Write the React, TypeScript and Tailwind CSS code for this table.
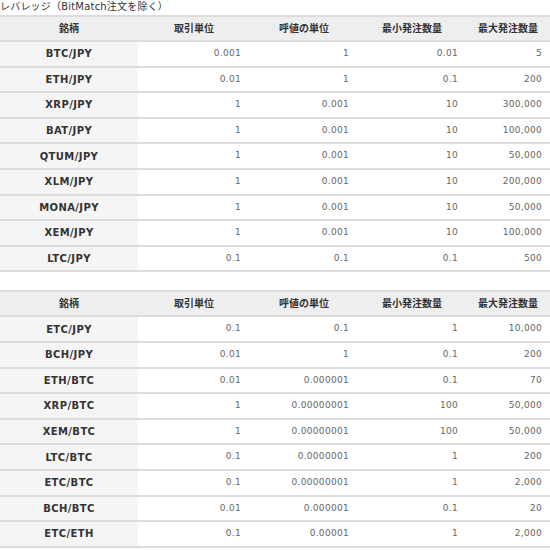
import React from 'react';

type Row = [string, string, string, string, string];

const TABLE_ONE: Row[] = [
  ['BTC/JPY', '0.001', '1', '0.01', '5'],
  ['ETH/JPY', '0.01', '1', '0.1', '200'],
  ['XRP/JPY', '1', '0.001', '10', '300,000'],
  ['BAT/JPY', '1', '0.001', '10', '100,000'],
  ['QTUM/JPY', '1', '0.001', '10', '50,000'],
  ['XLM/JPY', '1', '0.001', '10', '200,000'],
  ['MONA/JPY', '1', '0.001', '10', '50,000'],
  ['XEM/JPY', '1', '0.001', '10', '100,000'],
  ['LTC/JPY', '0.1', '0.1', '0.1', '500'],
];

const TABLE_TWO: Row[] = [
  ['ETC/JPY', '0.1', '0.1', '1', '10,000'],
  ['BCH/JPY', '0.01', '1', '0.1', '200'],
  ['ETH/BTC', '0.01', '0.000001', '0.1', '70'],
  ['XRP/BTC', '1', '0.00000001', '100', '50,000'],
  ['XEM/BTC', '1', '0.00000001', '100', '50,000'],
  ['LTC/BTC', '0.1', '0.0000001', '1', '200'],
  ['ETC/BTC', '0.1', '0.00000001', '1', '2,000'],
  ['BCH/BTC', '0.01', '0.000001', '0.1', '20'],
  ['ETC/ETH', '0.1', '0.00001', '1', '2,000'],
];

const HEADERS = ['銘柄', '取引単位', '呼値の単位', '最小発注数量', '最大発注数量'];

const SpecTable = ({ rows }: { rows: Row[] }) => (
  <table className="w-[550px] table-fixed border-collapse">
    <colgroup>
      <col className="w-[138px]" />
      <col className="w-[112px]" />
      <col className="w-[108px]" />
      <col className="w-[108px]" />
      <col className="w-[84px]" />
    </colgroup>
    <thead>
      <tr className="h-[25px] bg-[#eeeeee] border-t-2 border-b-2 border-[#dcdcdc]">
        {HEADERS.map((h) => (
          <th key={h} className="text-center text-[10px] font-bold text-[#333]">
            {h}
          </th>
        ))}
      </tr>
    </thead>
    <tbody>
      {rows.map((r) => (
        <tr key={r[0]} className="h-[25.6px] border-b-2 border-[#dcdcdc]">
          <td className="bg-[#f5f5f5] text-center text-[10px] tracking-[0.4px] font-bold text-[#333]">{r[0]}</td>
          <td className="text-right pr-[9px] text-[9px] tracking-[0.3px] text-[#666]">{r[1]}</td>
          <td className="text-right pr-[9px] text-[9px] tracking-[0.3px] text-[#666]">{r[2]}</td>
          <td className="text-right pr-[8px] text-[9px] tracking-[0.3px] text-[#666]">{r[3]}</td>
          <td className="text-right pr-[8px] text-[9px] tracking-[0.3px] text-[#666]">{r[4]}</td>
        </tr>
      ))}
    </tbody>
  </table>
);

export default function App() {
  return (
    <div
      className="w-[550px] h-[550px] overflow-hidden bg-white"
      style={{ fontFamily: '"DejaVu Sans", "Noto Sans CJK JP", sans-serif' }}
    >
      <div className="h-[15px] text-[10px] leading-[13px] tracking-[0.2px] text-[#333]">レバレッジ（BitMatch注文を除く）</div>
      <SpecTable rows={TABLE_ONE} />
      <div className="h-[18px]" />
      <SpecTable rows={TABLE_TWO} />
    </div>
  );
}
